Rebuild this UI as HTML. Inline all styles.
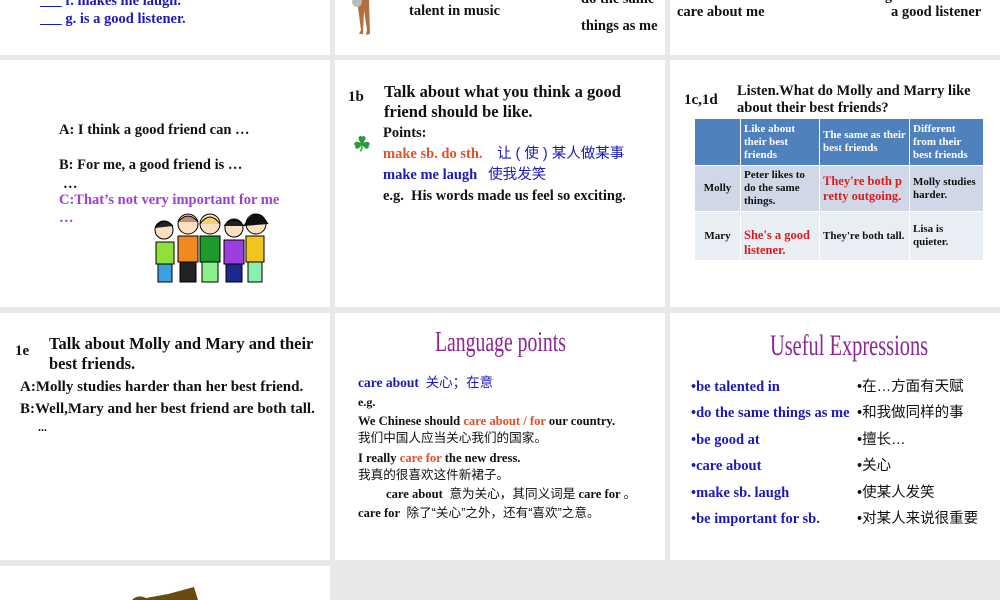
<!DOCTYPE html>
<html><head><meta charset="utf-8"><style>
*{margin:0;padding:0;box-sizing:border-box}
body{width:1000px;height:600px;background:#e8e8e8;position:relative;overflow:hidden;font-family:"Liberation Serif","Noto Serif CJK SC",serif;font-weight:bold;color:#111}
.s{position:absolute;background:#fff;overflow:hidden}
.t{position:absolute;white-space:nowrap;line-height:1.15}
.cn{font-family:"Liberation Sans","Noto Sans CJK SC",sans-serif;font-weight:normal;line-height:1}
.blue{color:#1a1ab8}
.red{color:#e0502a}
.pur{color:#9b3fd6}
.cond{font-weight:normal;color:#8e2596;display:inline-block;transform:scaleX(.68);transform-origin:left}
table{border-collapse:collapse;position:absolute;left:24px;top:58px;font-size:11px;line-height:13px}
td{border:1px solid #fff;padding:2px 3px;vertical-align:middle}
</style></head><body>

<!-- Row 1 -->
<div class="s" style="left:0;top:0;width:330px;height:55px">
  <div class="t blue" style="left:40px;top:-7px;font-size:14.5px"><u>&nbsp;&nbsp;&nbsp;&nbsp;&nbsp;&nbsp;</u> f. makes me laugh.</div>
  <div class="t blue" style="left:40px;top:11px;font-size:14.5px"><u>&nbsp;&nbsp;&nbsp;&nbsp;&nbsp;&nbsp;</u> g. is a good listener.</div>
</div>
<div class="s" style="left:335px;top:0;width:330px;height:55px">
  <svg style="position:absolute;left:14px;top:0" width="30" height="38"><path d="M8 0 L12 30 L10 34 L14 34 L15 10 L18 30 L17 35 L21 34 L20 0Z" fill="#b07040"/><circle cx="8" cy="2" r="5" fill="#bbb"/></svg>
  <div class="t" style="left:74px;top:3px;font-size:14.5px">talent in music</div>
  <div class="t" style="left:246px;top:-9px;font-size:14.5px">do the same</div>
  <div class="t" style="left:246px;top:18px;font-size:14.5px">things as me</div>
</div>
<div class="s" style="left:670px;top:0;width:330px;height:55px">
  <div class="t" style="left:7px;top:4px;font-size:14.5px">care about me</div>
  <div class="t" style="left:136px;top:-12px;font-size:14.5px">make me laugh</div>
  <div class="t" style="left:221px;top:4px;font-size:14.5px">a good listener</div>
</div>

<!-- Row 2 -->
<div class="s" style="left:0;top:60px;width:330px;height:247px">
  <div class="t" style="left:59px;top:62px;font-size:14.5px">A: I think a good friend can …</div>
  <div class="t" style="left:59px;top:97px;font-size:14.5px">B: For me, a good friend is …</div>
  <div class="t" style="left:63px;top:116px;font-size:14.5px">…</div>
  <div class="t pur" style="left:59px;top:132px;font-size:14.5px">C:That’s not very important for me</div>
  <div class="t pur" style="left:59px;top:150px;font-size:14.5px">…</div>
  <svg style="position:absolute;left:144px;top:150px" width="130" height="78" viewBox="0 0 130 78">
    <g stroke="#000" stroke-width="1">
    <rect x="12" y="32" width="18" height="22" fill="#8fe03a"/><rect x="14" y="54" width="14" height="18" fill="#3aa0e0"/>
    <rect x="34" y="26" width="20" height="26" fill="#f08a1e"/><rect x="36" y="52" width="16" height="20" fill="#222"/>
    <rect x="56" y="26" width="20" height="26" fill="#1e9a2a"/><rect x="58" y="52" width="16" height="20" fill="#8af08a"/>
    <rect x="80" y="30" width="20" height="24" fill="#9b3fe0"/><rect x="82" y="54" width="16" height="18" fill="#1a2a90"/>
    <rect x="102" y="26" width="18" height="26" fill="#f2c41e"/><rect x="104" y="52" width="14" height="20" fill="#8af0b0"/>
    <circle cx="20" cy="20" r="9" fill="#fde0c0"/><path d="M11 18 Q20 6 29 16" fill="#222"/>
    <circle cx="44" cy="14" r="10" fill="#fde0c0"/><path d="M34 12 Q44 0 54 12" fill="#c88a7a"/>
    <circle cx="66" cy="14" r="10" fill="#fde0c0"/><path d="M56 14 Q66 0 76 14" fill="#f0d070"/>
    <circle cx="90" cy="18" r="9" fill="#fde0c0"/><path d="M80 16 Q90 4 100 16" fill="#222"/>
    <circle cx="112" cy="14" r="10" fill="#fde0c0"/><path d="M100 16 Q112 -6 124 14" fill="#111"/>
    </g>
  </svg>
</div>
<div class="s" style="left:335px;top:60px;width:330px;height:247px">
  <div class="t" style="left:13px;top:29px;font-size:15px">1b</div>
  <div class="t" style="left:49px;top:22px;font-size:16.5px;line-height:20px">Talk about what you think a good<br>friend should be like.</div>
  <div class="t" style="left:48px;top:65px;font-size:14.5px">Points:</div>
  <div class="t" style="left:18px;top:74px;font-size:20px;color:#2a9a3a">☘</div>
  <div class="t" style="left:48px;top:86px;font-size:14.5px"><span class="red">make sb. do sth.</span>&nbsp;&nbsp;&nbsp;&nbsp;<span class="cn blue">让 ( 使 ) 某人做某事</span></div>
  <div class="t blue" style="left:48px;top:107px;font-size:14.5px">make me laugh&nbsp;&nbsp;&nbsp;<span class="cn">使我发笑</span></div>
  <div class="t" style="left:48px;top:128px;font-size:14.5px">e.g.&nbsp;&nbsp;His words made us feel so exciting.</div>
</div>
<div class="s" style="left:670px;top:60px;width:330px;height:247px">
  <div class="t" style="left:14px;top:32px;font-size:15px">1c,1d</div>
  <div class="t" style="left:67px;top:23px;font-size:14.5px;line-height:17px">Listen.What do Molly and Marry like<br>about their best friends?</div>
  <table>
    <tr style="background:#4f81bd;color:#fff;height:47px"><td style="width:46px"></td><td style="width:79px">Like about their best friends</td><td style="width:90px">The same as their best friends</td><td style="width:74px">Different from their best friends</td></tr>
    <tr style="background:#d0d8e8;height:46px"><td style="text-align:center">Molly</td><td>Peter likes to do the same things.</td><td style="color:#e01a1a;font-size:12.5px;line-height:15px">They're both p retty outgoing.</td><td>Molly studies harder.</td></tr>
    <tr style="background:#e9edf4;height:47px"><td style="text-align:center">Mary</td><td style="color:#e01a1a;font-size:12.5px;line-height:15px;padding-top:16px">She's a good listener.</td><td>They're both tall.</td><td>Lisa is quieter.</td></tr>
  </table>
</div>

<!-- Row 3 -->
<div class="s" style="left:0;top:313px;width:330px;height:247px">
  <div class="t" style="left:15px;top:30px;font-size:15px">1e</div>
  <div class="t" style="left:49px;top:21px;font-size:16.5px;line-height:20px">Talk about Molly and Mary and their<br>best friends.</div>
  <div class="t" style="left:20px;top:66px;font-size:15px">A:Molly studies harder than her best friend.</div>
  <div class="t" style="left:20px;top:88px;font-size:15px">B:Well,Mary and her best friend are both tall.</div>
  <div class="t" style="left:38px;top:108px;font-size:12px">...</div>
</div>
<div class="s" style="left:335px;top:313px;width:330px;height:247px">
  <div class="t" style="left:100px;top:13px;font-size:29px"><span class="cond">Language points</span></div>
  <div class="t blue" style="left:23px;top:62px;font-size:13.5px">care about&nbsp;&nbsp;<span class="cn">关心；在意</span></div>
  <div class="t" style="left:23px;top:83px;font-size:12px">e.g.</div>
  <div class="t" style="left:23px;top:101px;font-size:12.6px">We Chinese should <span class="red">care about / for</span> our country.</div>
  <div class="t cn" style="left:23px;top:119px;font-size:12.6px">我们中国人应当关心我们的国家。</div>
  <div class="t" style="left:23px;top:138px;font-size:12.6px">I really <span class="red">care for</span> the new dress.</div>
  <div class="t cn" style="left:23px;top:156px;font-size:12.6px">我真的很喜欢这件新裙子。</div>
  <div class="t" style="left:51px;top:174px;font-size:12.6px">care about <span class="cn">&nbsp;意为关心，其同义词是</span> care for <span class="cn">。</span></div>
  <div class="t" style="left:23px;top:193px;font-size:12.6px">care for <span class="cn">&nbsp;除了“关心”之外，还有“喜欢”之意。</span></div>
</div>
<div class="s" style="left:670px;top:313px;width:330px;height:247px">
  <div class="t" style="left:100px;top:16px;font-size:30px"><span class="cond">Useful Expressions</span></div>
  <div class="t blue" style="left:21px;top:61px;font-size:14.5px;line-height:26.4px">•be talented in<br>•do the same things as me<br>•be good at<br>•care about<br>•make sb. laugh<br>•be important for sb.</div>
  <div class="t cn" style="left:187px;top:61px;font-size:14.5px;line-height:26.4px">•在…方面有天赋<br>•和我做同样的事<br>•擅长…<br>•关心<br>•使某人发笑<br>•对某人来说很重要</div>
</div>

<!-- Row 4 -->
<div class="s" style="left:0;top:566px;width:330px;height:34px">
  <svg style="position:absolute;left:128px;top:20px" width="75" height="14"><path d="M4 14 Q10 8 18 12 L40 8 L55 4 L66 1 L70 14Z" fill="#6b4a10"/></svg>
</div>
</body></html>
